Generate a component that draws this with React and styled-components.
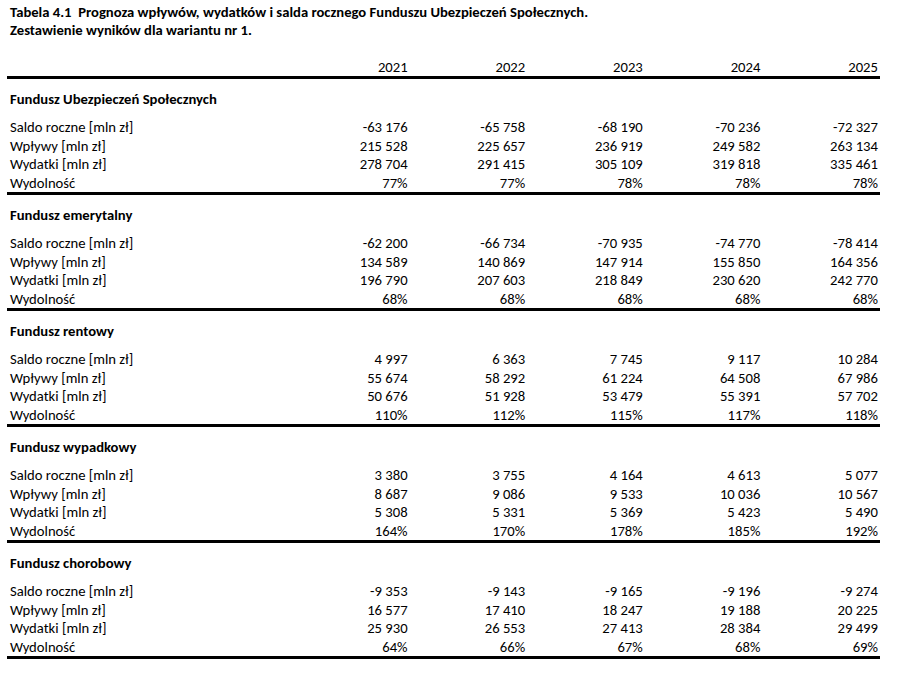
import React from 'react';
import styled, { createGlobalStyle } from 'styled-components';

const GlobalStyle = createGlobalStyle`
  body {
    margin: 0;
    background: #fff;
    color: #000;
    font-family: Carlito, "Liberation Sans", Arial, sans-serif;
    font-size: 14.67px;
  }
`;

const years = ['2021', '2022', '2023', '2024', '2025'];

const funds = [
  {
    name: 'Fundusz Ubezpieczeń Społecznych',
    rows: [
      ['Saldo roczne [mln zł]', '-63 176', '-65 758', '-68 190', '-70 236', '-72 327'],
      ['Wpływy [mln zł]', '215 528', '225 657', '236 919', '249 582', '263 134'],
      ['Wydatki [mln zł]', '278 704', '291 415', '305 109', '319 818', '335 461'],
      ['Wydolność', '77%', '77%', '78%', '78%', '78%'],
    ],
  },
  {
    name: 'Fundusz emerytalny',
    rows: [
      ['Saldo roczne [mln zł]', '-62 200', '-66 734', '-70 935', '-74 770', '-78 414'],
      ['Wpływy [mln zł]', '134 589', '140 869', '147 914', '155 850', '164 356'],
      ['Wydatki [mln zł]', '196 790', '207 603', '218 849', '230 620', '242 770'],
      ['Wydolność', '68%', '68%', '68%', '68%', '68%'],
    ],
  },
  {
    name: 'Fundusz rentowy',
    rows: [
      ['Saldo roczne [mln zł]', '4 997', '6 363', '7 745', '9 117', '10 284'],
      ['Wpływy [mln zł]', '55 674', '58 292', '61 224', '64 508', '67 986'],
      ['Wydatki [mln zł]', '50 676', '51 928', '53 479', '55 391', '57 702'],
      ['Wydolność', '110%', '112%', '115%', '117%', '118%'],
    ],
  },
  {
    name: 'Fundusz wypadkowy',
    rows: [
      ['Saldo roczne [mln zł]', '3 380', '3 755', '4 164', '4 613', '5 077'],
      ['Wpływy [mln zł]', '8 687', '9 086', '9 533', '10 036', '10 567'],
      ['Wydatki [mln zł]', '5 308', '5 331', '5 369', '5 423', '5 490'],
      ['Wydolność', '164%', '170%', '178%', '185%', '192%'],
    ],
  },
  {
    name: 'Fundusz chorobowy',
    rows: [
      ['Saldo roczne [mln zł]', '-9 353', '-9 143', '-9 165', '-9 196', '-9 274'],
      ['Wpływy [mln zł]', '16 577', '17 410', '18 247', '19 188', '20 225'],
      ['Wydatki [mln zł]', '25 930', '26 553', '27 413', '28 384', '29 499'],
      ['Wydolność', '64%', '66%', '67%', '68%', '69%'],
    ],
  },
];

const Page = styled.div`
  padding: 3px 0 0 10px;
  width: 868px;
`;

const Caption = styled.div`
  font-weight: bold;
  line-height: 18px;
`;

const Row = styled.div`
  display: grid;
  grid-template-columns: 280px repeat(5, 117.6px);
  height: ${(p) => p.$h || 18.5}px;
  line-height: ${(p) => p.$h || 18.5}px;
  margin-top: ${(p) => p.$top || 0}px;
  white-space: nowrap;
`;

const Num = styled.div`
  text-align: right;
`;

const Rule = styled.div`
  height: 3px;
  background: #000;
  margin-left: -3px;
  width: 873px;
`;

const Heading = styled.div`
  font-weight: bold;
  height: 18px;
  line-height: 18px;
  margin-top: 11px;
  margin-bottom: 10px;
`;

export default function App() {
  return (
    <Page>
      <GlobalStyle />
      <Caption>Tabela 4.1&nbsp; Prognoza wpływów, wydatków i salda rocznego Funduszu Ubezpieczeń Społecznych.</Caption>
      <Caption>Zestawienie wyników dla wariantu nr 1.</Caption>
      <Row $h={18} $top={19}>
        <div />
        {years.map((y) => (
          <Num key={y}>{y}</Num>
        ))}
      </Row>
      <Rule />
      {funds.map((f) => (
        <React.Fragment key={f.name}>
          <Heading>{f.name}</Heading>
          {f.rows.map((r) => (
            <Row key={r[0]}>
              <div>{r[0]}</div>
              {r.slice(1).map((v, i) => (
                <Num key={i}>{v}</Num>
              ))}
            </Row>
          ))}
          <Rule />
        </React.Fragment>
      ))}
    </Page>
  );
}
